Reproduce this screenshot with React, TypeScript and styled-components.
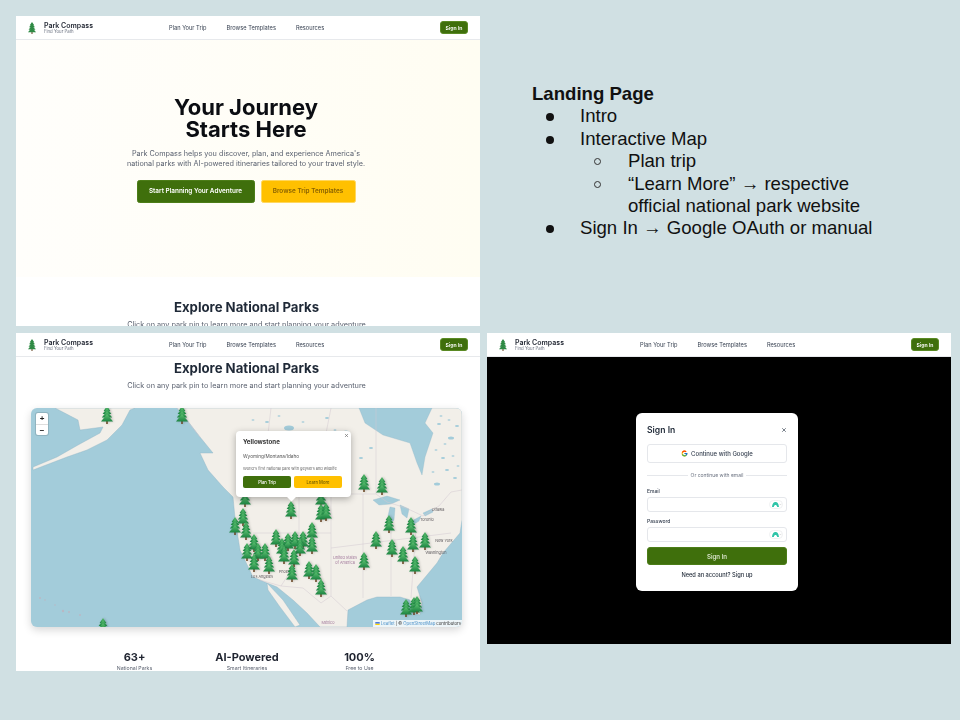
import React from 'react';
import styled, { createGlobalStyle } from 'styled-components';
import { FcGoogle } from 'react-icons/fc';
import { X, ChevronDown } from 'lucide-react';

const GREEN = '#3f6f0c';
const AMBER = '#ffc000';
const WATER = '#a3ccda';
const LAND = '#f2efe9';
const BORDER = '#d3c8d0';

const GlobalStyle = createGlobalStyle`
  html, body { margin: 0; padding: 0; background: #d0e0e3; }
  * { box-sizing: border-box; }
`;

const Slide = styled.div`
  width: 960px;
  height: 720px;
  background: #d0e0e3;
  padding: 16px;
  display: grid;
  grid-template-columns: 464px 464px;
  grid-template-rows: 310px 338px;
  column-gap: 7px;
  row-gap: 7px;
  font-family: Inter, "Liberation Sans", sans-serif;
`;

const Panel = styled.div<{ $height?: number; $dark?: boolean }>`
  display: flex;
  flex-direction: column;
  height: ${({ $height }) => ($height ? `${$height}px` : '100%')};
  background: ${({ $dark }) => ($dark ? '#000' : '#fff')};
  overflow: hidden;
  filter: blur(0.4px);
`;

const Header = styled.header`
  flex: none;
  height: 24px;
  display: flex;
  align-items: center;
  padding: 0 12px;
  background: #fff;
  border-bottom: 1px solid #e7e9ec;
`;

const Brand = styled.div`
  width: 141px;
  display: flex;
  align-items: center;
  gap: 8px;
`;

const BrandText = styled.div`
  display: flex;
  flex-direction: column;
`;

const BrandName = styled.span`
  font-size: 7px;
  line-height: 8px;
  font-weight: 600;
  color: #1f2430;
`;

const BrandTag = styled.span`
  font-size: 4.3px;
  line-height: 4px;
  color: #6b7280;
`;

const Nav = styled.nav`
  display: flex;
  gap: 20px;
`;

const NavLink = styled.span`
  font-size: 5.7px;
  color: #374151;
  white-space: nowrap;
`;

const SignInSmall = styled.button`
  margin-left: auto;
  width: 28px;
  height: 13px;
  padding: 0;
  border: 1px solid #5a8a24;
  border-radius: 3px;
  background: ${GREEN};
  color: #fff;
  font: 600 5.2px Inter, sans-serif;
`;

const Hero = styled.section`
  flex: none;
  height: 237px;
  padding: 56px 4px 0 0;
  display: flex;
  flex-direction: column;
  align-items: center;
  background: linear-gradient(to right, #fffefb, #fffdf2);
`;

const HeroTitle = styled.h1`
  margin: 0;
  font-size: 22px;
  line-height: 22px;
  font-weight: 700;
  color: #0b0d12;
  text-align: center;
`;

const HeroCopy = styled.p`
  margin: 8.5px 0 0;
  font-size: 7.25px;
  line-height: 10.2px;
  color: #5b6270;
  text-align: center;
  white-space: nowrap;
`;

const HeroActions = styled.div`
  display: flex;
  gap: 6px;
  margin-top: 11px;
`;

const HeroButton = styled.button<{ $amber?: boolean; $width: number }>`
  width: ${({ $width }) => $width}px;
  height: 23px;
  padding: 0;
  border: 1px solid ${({ $amber }) => ($amber ? '#ffd75e' : '#4c7d18')};
  border-radius: 2.5px;
  background: ${({ $amber }) => ($amber ? AMBER : GREEN)};
  color: ${({ $amber }) => ($amber ? '#8a6300' : '#fff')};
  font: 600 6.4px Inter, sans-serif;
`;

const SectionTitle = styled.h2<{ $top: number }>`
  margin: ${({ $top }) => $top}px 3px 0 0;
  font-size: 13.2px;
  line-height: 16px;
  font-weight: 700;
  color: #1f2937;
  text-align: center;
`;

const SectionCopy = styled.p<{ $top: number }>`
  margin: ${({ $top }) => $top}px 3px 0 0;
  font-size: 7.3px;
  line-height: 10px;
  color: #5b6270;
  text-align: center;
  white-space: nowrap;
`;

const MapCanvas = styled.div`
  position: relative;
  flex: none;
  width: 431px;
  height: 219px;
  margin: 17px 0 0 15px;
  border-radius: 6px;
  overflow: hidden;
  background: ${WATER};
  box-shadow: 0 3px 8px rgba(0, 0, 0, 0.16);
`;

const MapDrawing = styled.svg`
  display: block;
  width: 431px;
  height: 219px;
`;

const MapLabel = styled.text<{ $tone?: string }>`
  font: 3.8px Inter, sans-serif;
  fill: ${({ $tone }) => $tone || '#5e5a5e'};
  text-anchor: middle;
`;

const Pin = styled.svg<{ $x: number; $y: number }>`
  position: absolute;
  left: ${({ $x }) => $x - 31 - 6}px;
  top: ${({ $y }) => $y - 408 - 9}px;
  width: 12px;
  height: 18px;
  filter: drop-shadow(1px 0 1px rgba(0, 0, 0, 0.2));
`;

const ZoomControl = styled.div`
  position: absolute;
  left: 5px;
  top: 5px;
  width: 12px;
  display: flex;
  flex-direction: column;
  border-radius: 2px;
  background: #fff;
  box-shadow: 0 0 0 1px rgba(0, 0, 0, 0.12);
`;

const ZoomKey = styled.span`
  height: 11px;
  font: 700 8px/11px "Liberation Sans", sans-serif;
  color: #222;
  text-align: center;
  & + & { border-top: 1px solid #ddd; }
`;

const Attribution = styled.div`
  position: absolute;
  right: 0;
  bottom: 0;
  height: 7px;
  padding: 0 1px 0 2px;
  display: flex;
  align-items: center;
  gap: 1px;
  background: rgba(255, 255, 255, 0.8);
  font-size: 4.3px;
  color: #333;
  white-space: nowrap;
`;

const AttributionLink = styled.span`
  color: #4a90c8;
`;

const Popup = styled.div`
  position: absolute;
  left: 205px;
  top: 23px;
  width: 115px;
  height: 66px;
  padding: 7px;
  border-radius: 4px;
  background: #fff;
  box-shadow: 0 2px 7px rgba(0, 0, 0, 0.3);
  &::after {
    content: '';
    position: absolute;
    left: 52px;
    bottom: -3px;
    width: 7px;
    height: 7px;
    background: #fff;
    transform: rotate(45deg);
  }
`;

const PopupClose = styled(X)`
  position: absolute;
  right: 2px;
  top: 2px;
  width: 5px;
  height: 5px;
  color: #666;
`;

const PopupTitle = styled.div`
  font-size: 6.2px;
  line-height: 8px;
  font-weight: 700;
  color: #333;
`;

const PopupRegion = styled.div`
  margin-top: 7px;
  font-size: 4.7px;
  line-height: 6px;
  color: #555;
`;

const PopupBlurb = styled.div`
  margin-top: 7px;
  font-size: 3.9px;
  line-height: 6px;
  color: #666;
  white-space: nowrap;
`;

const PopupActions = styled.div`
  display: flex;
  gap: 3px;
  margin-top: 4px;
`;

const PopupButton = styled.button<{ $amber?: boolean }>`
  width: 48px;
  height: 12px;
  padding: 0;
  border: 0;
  border-radius: 2px;
  background: ${({ $amber }) => ($amber ? AMBER : GREEN)};
  color: ${({ $amber }) => ($amber ? '#6d5a00' : '#fff')};
  font: 500 4.2px Inter, sans-serif;
`;

const Stats = styled.div`
  display: grid;
  grid-template-columns: repeat(3, 112.5px);
  justify-content: center;
  margin: 24px 2px 0 0;
`;

const Stat = styled.div`
  display: flex;
  flex-direction: column;
  align-items: center;
`;

const StatValue = styled.span`
  font-size: 11px;
  line-height: 13px;
  font-weight: 700;
  color: #1f2430;
`;

const StatLabel = styled.span`
  margin-top: 1px;
  font-size: 5.2px;
  line-height: 7px;
  color: #5b6270;
`;

const Backdrop = styled.div`
  flex: 1;
  padding: 56px 0 0 149px;
`;

const Modal = styled.div`
  width: 162px;
  height: 178px;
  padding: 10px 11px;
  border-radius: 6px;
  background: #fff;
`;

const ModalHead = styled.div`
  display: flex;
  justify-content: space-between;
  align-items: center;
  height: 13px;
`;

const ModalTitle = styled.span`
  font-size: 8.6px;
  font-weight: 600;
  color: #1f2937;
`;

const ModalClose = styled(X)`
  width: 6px;
  height: 6px;
  color: #4b5563;
`;

const GoogleButton = styled.button`
  width: 140px;
  height: 19px;
  margin-top: 8px;
  padding: 0;
  display: flex;
  align-items: center;
  justify-content: center;
  gap: 3px;
  border: 1px solid #e5e7eb;
  border-radius: 3px;
  background: #fff;
  color: #374151;
  font: 500 6px Inter, sans-serif;
`;

const Divider = styled.div`
  display: flex;
  align-items: center;
  gap: 3px;
  height: 8px;
  margin-top: 8px;
  font-size: 5px;
  color: #6b7280;
  white-space: nowrap;
  &::before, &::after {
    content: '';
    flex: 1;
    height: 1px;
    background: #e5e7eb;
  }
`;

const FieldLabel = styled.div<{ $top: number }>`
  margin-top: ${({ $top }) => $top}px;
  font-size: 5px;
  line-height: 7px;
  font-weight: 500;
  color: #374151;
`;

const Field = styled.div`
  width: 140px;
  height: 15px;
  margin-top: 2px;
  padding-right: 3px;
  display: flex;
  align-items: center;
  justify-content: flex-end;
  border: 1px solid #e5e7eb;
  border-radius: 3px;
`;

const FieldBadge = styled.span`
  display: flex;
  align-items: center;
  width: 14px;
  height: 9px;
  padding-left: 2px;
  border-radius: 5px;
  border: 1px solid #f0f1f2;
`;

const BadgeCaret = styled(ChevronDown)`
  width: 3px;
  height: 3px;
  color: #888;
`;

const SubmitButton = styled.button`
  width: 140px;
  height: 18px;
  margin-top: 5px;
  padding: 0;
  border: 1px solid #4c7d18;
  border-radius: 3px;
  background: ${GREEN};
  color: #e9f0df;
  font: 500 6.2px Inter, sans-serif;
`;

const SwitchLine = styled.div`
  margin-top: 6px;
  font-size: 5.7px;
  line-height: 8px;
  font-weight: 500;
  color: #1f2937;
  text-align: center;
`;

const Notes = styled.div`
  padding: 67px 0 0 45px;
  font-family: "Liberation Sans", Arial, sans-serif;
  font-size: 18.6px;
  line-height: 22.4px;
  color: #111;
`;

const NotesTitle = styled.div`
  font-weight: 700;
`;

const NoteRow = styled.div<{ $level: number }>`
  display: grid;
  grid-template-columns: 48px 1fr;
  width: ${({ $level }) => ($level ? 293 : 372)}px;
  margin-left: ${({ $level }) => ($level ? 48 : 0)}px;
`;

const NoteMark = styled.span<{ $level: number }>`
  justify-self: start;
  margin: 8px 0 0 14px;
  width: ${({ $level }) => ($level ? 7 : 8)}px;
  height: ${({ $level }) => ($level ? 7 : 8)}px;
  border-radius: 50%;
  background: ${({ $level }) => ($level ? 'transparent' : '#111')};
  border: ${({ $level }) => ($level ? '1px solid #333' : 'none')};
`;

const PINS: [number, number][] = [
  [107, 415], [182, 415], [235, 526], [103, 627], [364, 483], [382, 486], [245, 498], [321, 498],
  [291, 510], [243, 517], [246, 531], [321, 513], [326, 512], [389, 524], [411, 526], [376, 540],
  [392, 548], [413, 543], [425, 541], [403, 555], [415, 565], [364, 561], [312, 531], [312, 545],
  [276, 538], [254, 543], [247, 552], [258, 552], [265, 552], [254, 563], [269, 565], [282, 547],
  [288, 542], [295, 540], [303, 540], [300, 547], [284, 555], [294, 558], [292, 573], [309, 570],
  [316, 573], [321, 588], [406, 608], [414, 606], [417, 605],
];

const LAKES = [
  'M328,0 L334,15 L352,27 L379,35 L386,55 L391,67 L394,49 L402,25 L394,15 L401,0 Z',
  'M342,92 L356,88 L369,92 L360,96 L348,97 Z',
  'M359,99 L364,100 L363,112 L359,116 L357,108 Z',
  'M369,97 L378,101 L376,110 L371,106 Z',
  'M379,114 L390,108 L388,113 L380,118 Z',
  'M392,105 L401,101 L402,104 L394,108 Z',
];

const BORDERS = [
  'M146,0 L169,29 M208,86 L345,86 L356,94 L375,100 L392,108 L408,98 L420,84 L431,82',
  'M229,172 L250,178 L272,180 L290,195 L300,188 L316,203',
  'M345,0 L345,86 M268,86 L268,150 L250,178 M300,86 L300,188 M332,86 L332,190 M360,120 L360,188 M385,120 L380,190',
  'M222,125 L300,125 M300,140 L420,125',
  'M300,0 L283,86 M240,0 L230,86',
];

const PONDS: [number, number, number][] = [
  [258, 20, 5], [280, 28, 3], [296, 10, 2], [315, 24, 3], [330, 50, 2], [412, 50, 2], [420, 30, 3],
  [408, 16, 2], [424, 70, 2], [406, 76, 3], [340, 40, 2], [226, 30, 2], [237, 62, 2],
  [410, 8, 1.5], [418, 12, 1.5], [426, 18, 2], [414, 36, 1.5], [405, 42, 1.5], [422, 48, 1.5],
  [416, 62, 2], [402, 64, 1.5], [427, 58, 1.5], [236, 14, 2], [248, 8, 1.5], [272, 14, 1.5],
  [304, 22, 1.5], [222, 12, 1.5],
];

const TreeLayers = ({ fill }: { fill: string }) => (
  <>
    <rect x="5.2" y="14" width="1.6" height="4" fill="#6b4a2a" />
    <path d="M6 0 L9.4 5 L2.6 5 Z" fill={fill} />
    <path d="M6 2 L10.4 8 L1.6 8 Z" fill={fill} />
    <path d="M6 5 L11.2 11.5 L0.8 11.5 Z" fill={fill} />
    <path d="M6 8 L12 15.5 L0 15.5 Z" fill={fill} />
  </>
);

const TreePin = ({ x, y }: { x: number; y: number }) => (
  <Pin $x={x} $y={y} viewBox="0 0 12 18">
    <TreeLayers fill="url(#pine)" />
  </Pin>
);

const LogoTree = styled.svg`
  width: 8px;
  height: 12px;
  flex: none;
`;

const ArchIcon = () => (
  <svg width="7" height="5" viewBox="0 0 7 5">
    <path d="M0 5 C0.4 1 2 0 3.5 0 C5 0 6.6 1 7 5 L5.2 5 C4.9 3.6 4.2 3 3.5 3 C2.8 3 2.1 3.6 1.8 5 Z" fill="#2fc4a8" />
  </svg>
);

const FlagIcon = () => (
  <svg width="5" height="3.5" viewBox="0 0 5 4">
    <rect width="5" height="2" fill="#4c7be1" />
    <rect y="2" width="5" height="2" fill="#ffd500" />
  </svg>
);

const SiteHeader = () => (
  <Header>
    <Brand>
      <LogoTree viewBox="0 0 12 18">
        <TreeLayers fill="#2f8a45" />
      </LogoTree>
      <BrandText>
        <BrandName>Park Compass</BrandName>
        <BrandTag>Find Your Path</BrandTag>
      </BrandText>
    </Brand>
    <Nav>
      <NavLink>Plan Your Trip</NavLink>
      <NavLink>Browse Templates</NavLink>
      <NavLink>Resources</NavLink>
    </Nav>
    <SignInSmall>Sign In</SignInSmall>
  </Header>
);

const ParkMap = () => (
  <MapCanvas>
    <MapDrawing viewBox="0 0 431 219">
      <defs>
        <linearGradient id="pine" x1="0" y1="0" x2="0" y2="1">
          <stop offset="0" stopColor="#5cc070" />
          <stop offset="1" stopColor="#1c8442" />
        </linearGradient>
      </defs>
      <path
        fill={LAND}
        stroke="#8fb4c4"
        strokeWidth="0.4"
        d="M24,0 L47,12 L49,22 L72,19 L69,25 L47,37 L26,49 L2,59 L2,62 L36,49 L56,42 L76,32 L91,17 L99,2 L104,0 Z"
      />
      <path
        fill={LAND}
        stroke="#8fb4c4"
        strokeWidth="0.4"
        d="M146,0 L156,12 L169,29 L182,45 L169,45 L177,62 L192,79 L202,89 L204,110 L209,142 L222,169 L236,175 L246,179 L262,192 L276,205 L289,219 L316,219 L317,202 L336,192 L346,189 L369,189 L379,192 L382,205 L389,207 L391,195 L386,179 L406,155 L412,145 L429,125 L431,112 L431,0 Z"
      />
      <path fill={LAND} stroke="#8fb4c4" strokeWidth="0.4" d="M236,175 L252,192 L269,217 L264,219 L249,199 L237,182 Z" />
      {LAKES.map((d) => (
        <path key={d} d={d} fill={WATER} stroke="#8fb4c4" strokeWidth="0.3" />
      ))}
      {PONDS.map(([cx, cy, r]) => (
        <ellipse key={`${cx}-${cy}`} cx={cx} cy={cy} rx={r} ry={r * 0.5} fill={WATER} />
      ))}
      {BORDERS.map((d) => (
        <path key={d} d={d} fill="none" stroke={BORDER} strokeWidth="0.5" />
      ))}
      <circle cx="9" cy="190" r="1" fill="#b9b8c4" />
      <circle cx="14" cy="192" r="0.8" fill="#b9b8c4" />
      <circle cx="24" cy="197" r="0.8" fill="#b9b8c4" />
      <circle cx="32" cy="203" r="1.2" fill="#b9b8c4" />
      <circle cx="38" cy="204" r="1" fill="#b9b8c4" />
      <circle cx="49" cy="207" r="1" fill="#b9b8c4" />
      <MapLabel x="314" y="151" $tone="#a0769a">United States</MapLabel>
      <MapLabel x="314" y="156" $tone="#a0769a">of America</MapLabel>
      <MapLabel x="231" y="170">Los Angeles</MapLabel>
      <MapLabel x="255" y="165">Phoenix</MapLabel>
      <MapLabel x="297" y="216" $tone="#a0769a">México</MapLabel>
      <MapLabel x="407" y="103">Ottawa</MapLabel>
      <MapLabel x="396" y="113">Toronto</MapLabel>
      <MapLabel x="413" y="134">New York</MapLabel>
      <MapLabel x="405" y="146">Washington</MapLabel>
    </MapDrawing>
    {PINS.map(([x, y]) => (
      <TreePin key={`${x}-${y}`} x={x} y={y} />
    ))}
    <ZoomControl>
      <ZoomKey>+</ZoomKey>
      <ZoomKey>−</ZoomKey>
    </ZoomControl>
    <Attribution>
      <FlagIcon />
      <AttributionLink>Leaflet</AttributionLink> | © <AttributionLink>OpenStreetMap</AttributionLink> contributors
    </Attribution>
    <Popup>
      <PopupClose strokeWidth={3} />
      <PopupTitle>Yellowstone</PopupTitle>
      <PopupRegion>Wyoming/Montana/Idaho</PopupRegion>
      <PopupBlurb>World's first national park with geysers and wildlife</PopupBlurb>
      <PopupActions>
        <PopupButton>Plan Trip</PopupButton>
        <PopupButton $amber>Learn More</PopupButton>
      </PopupActions>
    </Popup>
  </MapCanvas>
);

const App = () => (
  <>
    <GlobalStyle />
    <Slide>
      <Panel>
        <SiteHeader />
        <Hero>
          <HeroTitle>
            Your Journey
            <br />
            Starts Here
          </HeroTitle>
          <HeroCopy>
            Park Compass helps you discover, plan, and experience America's
            <br />
            national parks with AI-powered itineraries tailored to your travel style.
          </HeroCopy>
          <HeroActions>
            <HeroButton $width={118}>Start Planning Your Adventure</HeroButton>
            <HeroButton $amber $width={95}>Browse Trip Templates</HeroButton>
          </HeroActions>
        </Hero>
        <SectionTitle $top={22}>Explore National Parks</SectionTitle>
        <SectionCopy $top={5}>Click on any park pin to learn more and start planning your adventure</SectionCopy>
      </Panel>

      <Notes>
        <NotesTitle>Landing Page</NotesTitle>
        <NoteRow $level={0}><NoteMark $level={0} /><span>Intro</span></NoteRow>
        <NoteRow $level={0}><NoteMark $level={0} /><span>Interactive Map</span></NoteRow>
        <NoteRow $level={1}><NoteMark $level={1} /><span>Plan trip</span></NoteRow>
        <NoteRow $level={1}><NoteMark $level={1} /><span>“Learn More” → respective official national park website</span></NoteRow>
        <NoteRow $level={0}><NoteMark $level={0} /><span>Sign In → Google OAuth or manual</span></NoteRow>
      </Notes>

      <Panel>
        <SiteHeader />
        <SectionTitle $top={3}>Explore National Parks</SectionTitle>
        <SectionCopy $top={5}>Click on any park pin to learn more and start planning your adventure</SectionCopy>
        <ParkMap />
        <Stats>
          <Stat><StatValue>63+</StatValue><StatLabel>National Parks</StatLabel></Stat>
          <Stat><StatValue>AI-Powered</StatValue><StatLabel>Smart Itineraries</StatLabel></Stat>
          <Stat><StatValue>100%</StatValue><StatLabel>Free to Use</StatLabel></Stat>
        </Stats>
      </Panel>

      <Panel $height={311} $dark>
        <SiteHeader />
        <Backdrop>
          <Modal>
            <ModalHead>
              <ModalTitle>Sign In</ModalTitle>
              <ModalClose strokeWidth={3} />
            </ModalHead>
            <GoogleButton><FcGoogle size={7} />Continue with Google</GoogleButton>
            <Divider>Or continue with email</Divider>
            <FieldLabel $top={9}>Email</FieldLabel>
            <Field><FieldBadge><ArchIcon /><BadgeCaret /></FieldBadge></Field>
            <FieldLabel $top={6}>Password</FieldLabel>
            <Field><FieldBadge><ArchIcon /><BadgeCaret /></FieldBadge></Field>
            <SubmitButton>Sign In</SubmitButton>
            <SwitchLine>Need an account? Sign up</SwitchLine>
          </Modal>
        </Backdrop>
      </Panel>
    </Slide>
  </>
);

export default App;
